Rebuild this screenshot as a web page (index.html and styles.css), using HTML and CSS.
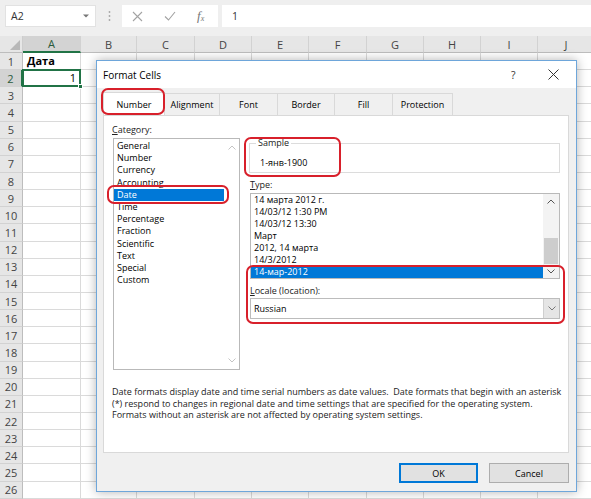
FILE: index.html
```html
<!DOCTYPE html>
<html lang="ru">
<head>
    <meta charset="UTF-8">
    <meta name="viewport" content="width=device-width, initial-scale=1.0">
    <title>Format Cells</title>
    <link rel="stylesheet" href="styles.css">
</head>
<body>
    <div class="formula-bar">
        <div class="name-box">
            <span>A2</span>
            <svg width="6" height="4" viewBox="0 0 6 4"><path d="M0 0.5h6L3 3.5z" fill="#777"/></svg>
        </div>
        <div class="grip">
            <svg width="3" height="12" viewBox="0 0 3 12"><circle cx="1.5" cy="2" r="0.9" fill="#a6a6a6"/><circle cx="1.5" cy="6" r="0.9" fill="#a6a6a6"/><circle cx="1.5" cy="10" r="0.9" fill="#a6a6a6"/></svg>
        </div>
        <div class="fx-buttons">
            <svg width="11" height="11" viewBox="0 0 11 11"><path d="M1 1l9 9M10 1l-9 9" stroke="#a3a3a3" stroke-width="1.1"/></svg>
            <svg width="12" height="10" viewBox="0 0 12 10"><path d="M1 5.5l3.5 3.5L11 1" stroke="#a3a3a3" stroke-width="1.1" fill="none"/></svg>
            <span class="fx">f<sub>x</sub></span>
        </div>
        <div class="formula-input">1</div>
    </div>

    <div class="sheet" id="sheet">
        <div class="sheet-row head">
            <div class="corner">
                <svg width="10" height="10" viewBox="0 0 10 10"><path d="M10 0v10H0z" fill="#b8b8b8"/></svg>
            </div>
            <div class="col-head active">A</div>
            <div class="col-head">B</div>
            <div class="col-head">C</div>
            <div class="col-head">D</div>
            <div class="col-head">E</div>
            <div class="col-head">F</div>
            <div class="col-head">G</div>
            <div class="col-head">H</div>
            <div class="col-head">I</div>
            <div class="col-head">J</div>
        </div>
    </div>

    <div class="dialog">
        <div class="dlg-title">
            <span class="dlg-caption">Format Cells</span>
            <span class="dlg-help">?</span>
            <svg class="dlg-close" width="11" height="11" viewBox="0 0 11 11"><path d="M0.5 0.5l10 10M10.5 0.5l-10 10" stroke="#333" stroke-width="1"/></svg>
        </div>

        <div class="dlg-body">
            <div class="tabs">
                <div class="tab active" style="width: 62px;">Number<span class="mark mark-tab"></span></div>
                <div class="tab" style="width: 55px;">Alignment</div>
                <div class="tab" style="width: 58px;">Font</div>
                <div class="tab" style="width: 57px;">Border</div>
                <div class="tab" style="width: 58px;">Fill</div>
                <div class="tab" style="width: 60px;">Protection</div>
            </div>

            <div class="panel">
                <div class="panel-top">
                    <div class="cat-col">
                        <div class="lbl"><u>C</u>ategory:</div>
                        <div class="listbox cat-list">
                            <div class="list-items">
                                <div class="item">General</div>
                                <div class="item">Number</div>
                                <div class="item">Currency</div>
                                <div class="item">Accounting</div>
                                <div class="item selected">Date<span class="mark mark-date"></span></div>
                                <div class="item">Time</div>
                                <div class="item">Percentage</div>
                                <div class="item">Fraction</div>
                                <div class="item">Scientific</div>
                                <div class="item">Text</div>
                                <div class="item">Special</div>
                                <div class="item">Custom</div>
                            </div>
                            <div class="vscroll disabled">
                                <svg width="8" height="5" viewBox="0 0 8 5"><path d="M0.5 4.5L4 1l3.5 3.5" stroke="#c4c4c4" fill="none"/></svg>
                                <svg width="8" height="5" viewBox="0 0 8 5"><path d="M0.5 0.5L4 4l3.5-3.5" stroke="#c4c4c4" fill="none"/></svg>
                            </div>
                        </div>
                    </div>

                    <div class="fmt-col">
                        <div class="sample-wrap">
                            <fieldset class="sample">
                                <legend>Sample</legend>
                                <div class="sample-value">1-янв-1900</div>
                            </fieldset>
                            <span class="mark mark-sample"></span>
                        </div>

                        <div class="lbl type-lbl"><u>T</u>ype:</div>
                        <div class="listbox type-list">
                            <div class="list-items">
                                <div class="item">14 марта 2012 г.</div>
                                <div class="item">14/03/12 1:30 PM</div>
                                <div class="item">14/03/12 13:30</div>
                                <div class="item">Март</div>
                                <div class="item">2012, 14 марта</div>
                                <div class="item">14/3/2012</div>
                                <div class="item selected">14-мар-2012</div>
                            </div>
                            <div class="vscroll">
                                <div class="arrow">
                                    <svg width="8" height="5" viewBox="0 0 8 5"><path d="M0.5 4.5L4 1l3.5 3.5" stroke="#555" fill="none"/></svg>
                                </div>
                                <div class="track"><div class="thumb"></div></div>
                                <div class="arrow">
                                    <svg width="8" height="5" viewBox="0 0 8 5"><path d="M0.5 0.5L4 4l3.5-3.5" stroke="#555" fill="none"/></svg>
                                </div>
                            </div>
                        </div>

                        <div class="lbl locale-lbl"><u>L</u>ocale (location):</div>
                        <div class="select">
                            <span>Russian</span>
                            <div class="select-btn">
                                <svg width="8" height="5" viewBox="0 0 8 5"><path d="M0.5 0.5L4 4l3.5-3.5" stroke="#777" fill="none"/></svg>
                            </div>
                        </div>

                        <span class="mark mark-locale"></span>
                    </div>
                </div>

                <p class="desc">
                    Date formats display date and time serial numbers as date values.&nbsp; Date formats that begin with an asterisk<br>
                    (*) respond to changes in regional date and time settings that are specified for the operating system.<br>
                    Formats without an asterisk are not affected by operating system settings.
                </p>
            </div>

            <div class="dlg-buttons">
                <button class="btn default">OK</button>
                <button class="btn">Cancel</button>
            </div>
        </div>
    </div>

    <script>
    const sheet = document.getElementById('sheet');
    const values = {
        1: '<div class="cell bold">Дата</div>',
        2: '<div class="cell num current">1<span class="handle"></span></div>'
    };

    for (let r = 1; r <= 26; r++) {
        const row = document.createElement('div');
        row.className = 'sheet-row';
        let html = `<div class="row-head${r === 2 ? ' active' : ''}">${r}</div>`;
        html += values[r] || '<div class="cell"></div>';
        for (let c = 1; c < 10; c++) {
            html += '<div class="cell"></div>';
        }
        row.innerHTML = html;
        sheet.appendChild(row);
    }
    </script>
</body>
</html>
```

FILE: styles.css
```css
* {
    box-sizing: border-box;
}

body {
    margin: 0;
    width: 591px;
    height: 499px;
    overflow: hidden;
    position: relative;
    background-color: #ffffff;
    font-family: "Open Sans", "Noto Sans", sans-serif;
    color: #222;
}

/* formula bar */
.formula-bar {
    height: 36px;
    background-color: #efefef;
    display: flex;
    align-items: flex-start;
    padding: 5px 0 0 5px;
}

.name-box {
    width: 91px;
    height: 22px;
    background: #fff;
    border: 1px solid #e2e2e2;
    display: flex;
    align-items: center;
    justify-content: space-between;
    padding: 0 6px 0 5px;
    font-size: 10.5px;
    color: #333;
}

.grip {
    width: 26px;
    height: 22px;
    display: flex;
    align-items: center;
    justify-content: center;
}

.fx-buttons {
    width: 96px;
    height: 22px;
    background: #fff;
    display: flex;
    align-items: center;
    gap: 21px;
    padding-left: 10px;
}

.fx {
    font-family: "Liberation Serif", serif;
    font-style: italic;
    font-size: 13px;
    color: #777;
    line-height: 1;
}

.fx sub {
    font-size: 8px;
    vertical-align: -1px;
}

.formula-input {
    flex: 1;
    margin-left: 4px;
    height: 22px;
    background: #fff;
    padding-left: 10px;
    font-size: 10.5px;
    line-height: 22px;
    color: #333;
}

/* sheet grid */
.sheet-row {
    display: grid;
    grid-template-columns: 23px 58px 56px 58px 57px 57px 58px 57px 57px 57px 57px;
    height: 17.15px;
}

.sheet-row.head {
    height: 17px;
}

.corner,
.col-head,
.row-head {
    background-color: #e6e6e6;
    font-size: 11px;
    color: #444;
    display: flex;
    align-items: center;
    justify-content: center;
}

.corner {
    border-right: 1px solid #cdcdcd;
    border-bottom: 1px solid #bdbdbd;
    align-items: flex-end;
    justify-content: flex-end;
    padding: 0 2px 2px 0;
}

.col-head {
    border-right: 1px solid #d2d2d2;
    border-bottom: 1px solid #bdbdbd;
}

.col-head.active {
    background-color: #d3d3d3;
    border-bottom: 2px solid #217346;
    color: #2a5a3c;
}

.row-head {
    border-right: 1px solid #bdbdbd;
    border-bottom: 1px solid #d2d2d2;
}

.row-head.active {
    background-color: #d3d3d3;
    border-right: 2px solid #217346;
    color: #2a5a3c;
}

.cell {
    border-right: 1px solid #dadada;
    border-bottom: 1px solid #dadada;
    font-size: 11px;
    line-height: 16px;
    padding: 0 4px;
    white-space: nowrap;
    position: relative;
}

.cell.bold {
    font-weight: 700;
    color: #000;
}

.cell.num {
    text-align: right;
    color: #000;
}

.cell.current::after {
    content: "";
    position: absolute;
    left: -1px;
    top: -1px;
    right: -1px;
    bottom: -1px;
    border: 2px solid #217346;
}

.handle {
    position: absolute;
    right: -3px;
    bottom: -3px;
    width: 5px;
    height: 5px;
    background: #217346;
    border: 1px solid #fff;
    z-index: 1;
}

/* dialog */
.dialog {
    position: absolute;
    left: 96px;
    top: 60px;
    width: 481px;
    height: 432px;
    background-color: #f0f0f0;
    border: 1px solid #6ea6da;
    box-shadow: 0 0 10px rgba(0, 0, 0, 0.3);
    display: flex;
    flex-direction: column;
    font-size: 9px;
    color: #000;
}

.dlg-title {
    height: 27px;
    background-color: #ffffff;
    display: flex;
    align-items: center;
    padding-left: 6px;
}

.dlg-caption {
    font-size: 10px;
    flex: 1;
}

.dlg-help {
    font-size: 10.5px;
    width: 37px;
    color: #333;
}

.dlg-close {
    margin-right: 17px;
}

.dlg-body {
    flex: 1;
    padding: 5px 7px 0 6px;
    display: flex;
    flex-direction: column;
}

.tabs {
    display: flex;
    height: 22px;
}

.tab {
    height: 22px;
    border: 1px solid #d9d9d9;
    border-bottom: none;
    border-left: none;
    background-color: #f0f0f0;
    display: flex;
    align-items: center;
    justify-content: center;
    position: relative;
}

.tab.active {
    background-color: #ffffff;
    border-left: 1px solid #d9d9d9;
    height: 23px;
    margin-top: -1px;
    z-index: 1;
}

.panel {
    height: 338px;
    background-color: #ffffff;
    border: 1px solid #d9d9d9;
    padding: 8px 8px 0 8px;
}

.panel-top {
    display: flex;
    gap: 10px;
}

.cat-col {
    width: 128px;
}

.fmt-col {
    flex: 1;
    position: relative;
}

.lbl {
    line-height: 12px;
    color: #222;
}

.cat-col .lbl {
    height: 14px;
    line-height: 12px;
}

.listbox {
    border: 1px solid #b9b9b9;
    display: flex;
    background: #fff;
}

.list-items {
    flex: 1;
}

.item {
    line-height: 12px;
    padding-left: 3px;
    white-space: nowrap;
    position: relative;
}

.item.selected {
    background-color: #0078d7;
    color: #fff;
}

.cat-list {
    margin-left: 1px;
    height: 232px;
}

.cat-list .list-items {
    padding-top: 1px;
}

.cat-list .item {
    line-height: 12.2px;
}

.vscroll {
    width: 15px;
    display: flex;
    flex-direction: column;
    align-items: center;
    justify-content: space-between;
}

.vscroll.disabled {
    padding: 6px 0;
}

.sample-wrap {
    position: relative;
    margin-top: 13px;
}

.sample {
    margin: 0 0 0 -1px;
    padding: 0 0 0 6px;
    border: 1px solid #dcdcdc;
    min-inline-size: 0;
}

.sample legend {
    padding: 0 2px;
    line-height: 12px;
    color: #222;
}

.sample-value {
    height: 23px;
    padding: 8px 0 0 4px;
    line-height: 12px;
}

.type-lbl {
    margin-top: 6px;
}

.type-list {
    margin-top: 2px;
    height: 86px;
}

.type-list .vscroll {
    width: 16px;
    background-color: #f3f3f3;
    justify-content: flex-start;
}

.arrow {
    height: 14px;
    width: 16px;
    display: flex;
    align-items: center;
    justify-content: center;
}

.track {
    flex: 1;
    width: 100%;
    display: flex;
    flex-direction: column;
    justify-content: flex-end;
}

.thumb {
    height: 26px;
    margin: 0 1px;
    background-color: #cdcdcd;
}

.locale-lbl {
    margin-top: 6px;
}

.select {
    margin-top: 1px;
    height: 21px;
    border: 1px solid #bcbcbc;
    display: flex;
    align-items: stretch;
    padding-left: 3px;
}

.select span {
    flex: 1;
    line-height: 19px;
}

.select-btn {
    width: 16px;
    background-color: #e5e5e5;
    border-left: 1px solid #cfcfcf;
    display: flex;
    align-items: center;
    justify-content: center;
}

.desc {
    margin: 16px 0 0 0;
    line-height: 11.5px;
    color: #222;
    white-space: nowrap;
}

.dlg-buttons {
    display: flex;
    justify-content: flex-end;
    gap: 11px;
    margin-top: 10px;
}

.btn {
    width: 80px;
    height: 20px;
    font-family: inherit;
    font-size: 9px;
    background-color: #e1e1e1;
    border: 1px solid #adadad;
    color: #000;
    padding: 0;
}

.btn.default {
    width: 79px;
    border: 1px solid #0078d7;
    box-shadow: inset 0 0 0 1px #0078d7;
}

/* red annotation marks */
.mark {
    position: absolute;
    border: 2.5px solid #d8202b;
    border-radius: 7px;
    pointer-events: none;
    z-index: 5;
}

.mark-tab {
    left: -3px;
    right: -1px;
    top: -5px;
    bottom: 0;
}

.mark-date {
    left: -7px;
    right: -5px;
    top: -4px;
    bottom: -3px;
}

.mark-sample {
    left: -6px;
    width: 97px;
    top: 0;
    bottom: -4px;
}

.mark-locale {
    left: -4px;
    right: -5px;
    top: 141px;
    height: 59px;
}
```
